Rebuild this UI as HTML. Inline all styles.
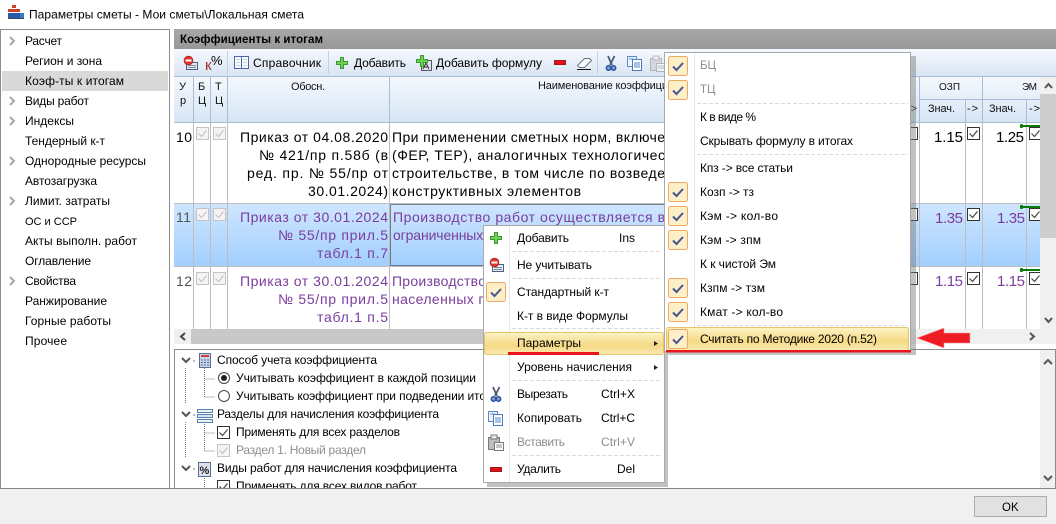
<!DOCTYPE html>
<html><head><meta charset="utf-8"><style>
html,body{margin:0;padding:0;background:#fff;width:1056px;height:524px;overflow:hidden}
svg{display:block}
text{font-family:"Liberation Sans","DejaVu Sans",sans-serif;font-size:12px;fill:#000}
.c{font-size:14px}
.n{font-size:15px}
.p{fill:#7a3d9c}
.g{fill:#8e8e8e}
.s{font-size:11px;fill:#111}
</style></head><body>
<svg width="1056" height="524" viewBox="0 0 1056 524" xmlns="http://www.w3.org/2000/svg">
<defs>
<linearGradient id="tb" x1="0" y1="0" x2="0" y2="1"><stop offset="0" stop-color="#f5f9fe"/><stop offset="1" stop-color="#d9e5f3"/></linearGradient>
<linearGradient id="hd" x1="0" y1="0" x2="0" y2="1"><stop offset="0" stop-color="#f4f8fd"/><stop offset="1" stop-color="#d6e5f5"/></linearGradient>
<linearGradient id="sel" x1="0" y1="0" x2="0" y2="1"><stop offset="0" stop-color="#cfe6ff"/><stop offset="1" stop-color="#a2cffd"/></linearGradient>
<linearGradient id="hl" x1="0" y1="0" x2="0" y2="1"><stop offset="0" stop-color="#fdf3c6"/><stop offset=".6" stop-color="#f5d985"/><stop offset="1" stop-color="#fbeab2"/></linearGradient>
<linearGradient id="bar" x1="0" y1="0" x2="0" y2="1"><stop offset="0" stop-color="#a8a8a8"/><stop offset="1" stop-color="#989898"/></linearGradient>
<g id="mc"><rect x=".5" y=".5" width="19" height="19" rx="2" fill="#fdf0c8" stroke="#f0a860"/><path d="M5 10.5l3.5 3.5 6.5-7" fill="none" stroke="#4a5590" stroke-width="2"/></g>
<g id="dc"><rect x=".5" y=".5" width="12" height="12" fill="#f4f4f4" stroke="#c4c4c4"/><path d="M2.5 6.5l3 3 5-6" fill="none" stroke="#c4c4c4" stroke-width="1.2"/></g>
<g id="kc"><rect x=".5" y=".5" width="12" height="12" fill="#fff" stroke="#333"/><path d="M2.500 6.500l3 3 5-6" fill="none" stroke="#444" stroke-width="1.2"/></g>
<path id="rc" d="M0 0l4 4-4 4" fill="none" stroke="#a8a8a8" stroke-width="2"/>
<path id="dn" d="M0 0l4 4 4-4" fill="none" stroke="#555" stroke-width="2"/>
<g id="gb"><rect x="0" y="0" width="19" height="2" fill="#0a7a0a"/><rect x="-1" y="-1" width="3" height="4" rx="1" fill="#0a7a0a"/></g>
<g id="plus"><path d="M4.500 .5h3v4h4v3h-4v4h-3v-4h-4v-3h4z" fill="#6fd24e" stroke="#3a9a34"/></g>
<g id="noent"><rect x="3.500" y="6.500" width="11" height="7" fill="#e6ecf4" stroke="#4a5f80"/><path d="M5 9.500h8M5 11.500h8" stroke="#7a8aa0"/><circle cx="5.500" cy="4.500" r="4.300" fill="#e0352c" stroke="#b02820"/><rect x="2.500" y="3.500" width="6" height="2" fill="#fff"/></g>
<g id="scis"><path d="M2 0l4 9M8.500 0L4 9" stroke="#4a5a76" stroke-width="1.800" fill="none"/><circle cx="2.500" cy="12" r="2.200" fill="#8aa4d0" stroke="#2a50a0" stroke-width="1.500"/><circle cx="7.500" cy="12" r="2.200" fill="#8aa4d0" stroke="#2a50a0" stroke-width="1.500"/></g>
<g id="copy"><rect x=".5" y=".5" width="9" height="10" fill="#f0f6fc" stroke="#5a8ac8"/><rect x="5.500" y="3.500" width="9" height="11" fill="#fff" stroke="#4a7ac0"/><path d="M7 7h6M7 9h6M7 11h6M2 3h5" stroke="#5a8ac8"/></g>
<g id="paste"><rect x=".5" y="2.500" width="11" height="12" fill="#bdbdbd" stroke="#777"/><rect x="3" y="0" width="6" height="4" fill="#e8e8e8" stroke="#777"/><rect x="6.500" y="7.500" width="9" height="8" fill="#fff" stroke="#777"/><path d="M8 10h6M8 12h6" stroke="#888"/></g>
<g id="minus"><rect x=".5" y=".5" width="11" height="4" fill="#e0101c" stroke="#a01818"/></g>
<clipPath id="tree"><rect x="175" y="350" width="865" height="138"/></clipPath>
</defs>

<!-- title -->
<g>
<rect x="8" y="9" width="4" height="3" fill="#d04030"/><rect x="12" y="5" width="4" height="3" fill="#d04030"/><rect x="12" y="9" width="4" height="3" fill="#d84030"/><rect x="16" y="9" width="4" height="3" fill="#d04030"/>
<rect x="8" y="13" width="4" height="5" fill="#2a5aa8"/><rect x="12" y="13" width="4" height="5" fill="#2a5aa8"/><rect x="16" y="13" width="4" height="5" fill="#2a5aa8"/><rect x="20" y="13" width="4" height="5" fill="#2a80c8"/>
<rect x="8" y="18" width="16" height="1" fill="#3a4a60"/>
</g>
<text x="29" y="18.5" textLength="275" lengthAdjust="spacing">Параметры сметы - Мои сметы\Локальная смета</text>

<!-- left nav -->
<rect x=".5" y="29.5" width="169" height="459" fill="#fff" stroke="#8c8c8c"/>
<rect x="2" y="71" width="166" height="20" fill="#d9d9d9"/>
<use href="#rc" x="10" y="37"/><use href="#rc" x="10" y="97"/><use href="#rc" x="10" y="117"/><use href="#rc" x="10" y="157"/><use href="#rc" x="10" y="197"/><use href="#rc" x="10" y="277"/>
<text x="25" y="45" textLength="37">Расчет</text>
<text x="25" y="65" textLength="77">Регион и зона</text>
<text x="25" y="85" textLength="99">Коэф-ты к итогам</text>
<text x="25" y="105" textLength="64">Виды работ</text>
<text x="25" y="125" textLength="49">Индексы</text>
<text x="25" y="145" textLength="80">Тендерный к-т</text>
<text x="25" y="165" textLength="121">Однородные ресурсы</text>
<text x="25" y="185" textLength="72">Автозагрузка</text>
<text x="25" y="205" textLength="85">Лимит. затраты</text>
<text x="25" y="225" textLength="52" style="font-size:11px">ОС и ССР</text>
<text x="25" y="245" textLength="112">Акты выполн. работ</text>
<text x="25" y="265" textLength="66">Оглавление</text>
<text x="25" y="285" textLength="51">Свойства</text>
<text x="25" y="305" textLength="82">Ранжирование</text>
<text x="25" y="325" textLength="86">Горные работы</text>
<text x="25" y="345" textLength="42">Прочее</text>

<!-- header bar -->
<rect x="174" y="29" width="882" height="20" fill="url(#bar)"/>
<text x="180" y="43" textLength="143" style="font-weight:bold;font-size:11.5px" fill="#111">Коэффициенты к итогам</text>

<!-- toolbar -->
<rect x="174" y="49" width="882" height="27" fill="url(#tb)"/>
<rect x="174" y="76" width="882" height="1" fill="#a9bcd6"/>
<rect x="227" y="51" width="1" height="23" fill="#c3d0e0"/><rect x="328" y="51" width="1" height="23" fill="#c3d0e0"/><rect x="597" y="51" width="1" height="23" fill="#c3d0e0"/>
<use href="#noent" x="183" y="56"/>
<text x="205" y="70" style="font-size:15px;fill:#a03030">к</text>
<text x="211" y="65" style="font-size:13px" fill="#333">%</text>
<rect x="234.500" y="56.500" width="14" height="12" fill="#f8fbfe" stroke="#4a6aa8"/><path d="M241.500 57v11" stroke="#4a6aa8"/><path d="M236 59.500h4M236 62.500h4M236 65.500h4M243 59.500h4M243 62.500h4M243 65.500h4" stroke="#c8d4e4"/>
<text x="253" y="67" textLength="68">Справочник</text>
<use href="#plus" x="336" y="57"/>
<text x="354" y="67" textLength="52">Добавить</text>
<rect x="421.500" y="60.500" width="10" height="10" fill="#dfe3ea" stroke="#556"/><path d="M423 69l3-6 3 6M424 67h4" fill="none" stroke="#333"/>
<use href="#plus" x="416" y="55"/>
<text x="436" y="67" textLength="106">Добавить формулу</text>
<use href="#minus" x="554" y="60"/>
<path d="M577.500 65.500l7-7h5l2 2-7 7h-5z" fill="#fafbfd" stroke="#6a7484"/><path d="M577 69.500h14" stroke="#111"/>
<use href="#scis" x="606" y="56"/>
<use href="#copy" x="627" y="56"/>
<g opacity=".45"><use href="#paste" x="650" y="56"/></g>

<!-- grid header -->
<rect x="174" y="77" width="866" height="45" fill="url(#hd)"/>
<path d="M174 122.500H1040M919 99.500H1040" stroke="#a9bcd6"/>
<path d="M193.500 77V122M210.500 77V122M227.500 77V122M389.500 77V122M919.500 77V122M982.500 77V122M965.500 99V122M1026.500 99V122" stroke="#a9bcd6"/>
<text class="s" x="179" y="90" textLength="9">У</text><text class="s" x="180" y="104">р</text>
<text class="s" x="198" y="90">Б</text><text class="s" x="198" y="104">Ц</text>
<text class="s" x="215" y="90">Т</text><text class="s" x="215" y="104">Ц</text>
<text class="s" x="291" y="90" textLength="34">Обосн.</text>
<text class="s" x="538" y="89" textLength="130">Наименование коэффици</text>
<text class="s" x="939" y="90" textLength="21" style="font-size:10px">ОЗП</text>
<text class="s" x="1022" y="90" textLength="15" style="font-size:10px">ЭМ</text>
<text class="s" x="928" y="112" textLength="27">Знач.</text>
<text class="s" x="989" y="112" textLength="27">Знач.</text>
<text class="s" x="967" y="112" textLength="11">-&gt;</text>
<text class="s" x="1029" y="112" textLength="11">-&gt;</text>
<text class="s" x="908" y="112" textLength="9">-&gt;</text>

<!-- rows -->
<rect x="174" y="204" width="866" height="62" fill="url(#sel)"/>
<path d="M174 203.500H1040M174 266.500H1040" stroke="#bdbdbd"/>
<path d="M193.500 123V329M210.500 123V329M227.500 123V329M389.500 123V329M919.500 123V329M965.500 123V329M982.500 123V329M1026.500 123V329" stroke="#bdbdbd"/>
<rect x="390.500" y="204.500" width="400" height="61" fill="none" stroke="#222" stroke-dasharray="1 1"/>

<text class="c" x="176" y="142" textLength="16">10</text>
<use href="#dc" x="196" y="127"/><use href="#dc" x="213" y="127"/>
<text class="c" x="240" y="142" textLength="148">Приказ от 04.08.2020</text>
<text class="c" x="259" y="160" textLength="129">№ 421/пр п.58б (в</text>
<text class="c" x="247" y="178" textLength="141">ред. пр. № 55/пр от</text>
<text class="c" x="308" y="196" textLength="80">30.01.2024)</text>
<text class="c" x="392" y="142" textLength="273">При применении сметных норм, включе</text>
<text class="c" x="392" y="160" textLength="273">(ФЕР, ТЕР), аналогичных технологичес</text>
<text class="c" x="392" y="178" textLength="273">строительстве, в том числе по возведе</text>
<text class="c" x="392" y="196" textLength="189">конструктивных элементов</text>

<text class="c p" x="176" y="222" textLength="15" style="fill:#555">11</text>
<use href="#dc" x="196" y="208"/><use href="#dc" x="213" y="208"/>
<text class="c p" x="240" y="222" textLength="148">Приказ от 30.01.2024</text>
<text class="c p" x="278" y="240" textLength="110">№ 55/пр прил.5</text>
<text class="c p" x="317" y="258" textLength="71">табл.1 п.7</text>
<text class="c p" x="393" y="222" textLength="272">Производство работ осуществляется в</text>
<text class="c p" x="393" y="240" textLength="94">ограниченных:</text>

<text class="c" x="176" y="286" textLength="16" style="fill:#555">12</text>
<use href="#dc" x="196" y="272"/><use href="#dc" x="213" y="272"/>
<text class="c p" x="240" y="286" textLength="148">Приказ от 30.01.2024</text>
<text class="c p" x="278" y="304" textLength="110">№ 55/пр прил.5</text>
<text class="c p" x="317" y="322" textLength="71">табл.1 п.5</text>
<text class="c p" x="392" y="286" textLength="94">Производство</text>
<text class="c p" x="392" y="304" textLength="94">населенных п</text>

<text class="n" x="934" y="142" textLength="29">1.15</text>
<text class="n" x="996" y="142" textLength="28">1.25</text>
<text class="n p" x="935" y="223" textLength="28">1.35</text>
<text class="n p" x="997" y="223" textLength="28">1.35</text>
<text class="n p" x="935" y="286" textLength="28">1.15</text>
<text class="n p" x="997" y="286" textLength="28">1.15</text>
<use href="#kc" x="967" y="127"/><use href="#kc" x="967" y="208"/><use href="#kc" x="967" y="272"/>
<use href="#kc" x="1029" y="127"/><use href="#kc" x="1029" y="208"/><use href="#kc" x="1029" y="272"/>
<rect x="905.500" y="127.500" width="12" height="12" fill="#fff" stroke="#333"/><rect x="905.500" y="208.500" width="12" height="12" fill="#fff" stroke="#333"/><rect x="905.500" y="272.500" width="12" height="12" fill="#fff" stroke="#333"/>
<use href="#gb" x="1021" y="125"/><use href="#gb" x="1021" y="206"/><use href="#gb" x="1021" y="269"/>

<!-- v scroll -->
<rect x="1040" y="77" width="16" height="252" fill="#f0f0f0"/>
<rect x="1040" y="94" width="16" height="144" fill="#cdcdcd"/>
<path d="M1045 88l3.500-4 3.500 4" fill="none" stroke="#555" stroke-width="2"/>
<path d="M1045 318l3.500 4 3.500-4" fill="none" stroke="#555" stroke-width="2"/>
<!-- h scroll -->
<rect x="174" y="329" width="882" height="15" fill="#f0f0f0"/>
<rect x="191" y="329" width="600" height="15" fill="#c8c8c8"/>
<path d="M185 333l-4 3.500 4 3.500" fill="none" stroke="#444" stroke-width="2"/>
<path d="M1030 333l4 3.500-4 3.500" fill="none" stroke="#555" stroke-width="2"/>

<!-- tree -->
<rect x="174.500" y="349.500" width="881" height="139" fill="#fff" stroke="#8c8c8c"/>
<rect x="1040" y="350" width="15" height="138" fill="#f0f0f0"/>
<path d="M1044 364l4-4 4 4" fill="none" stroke="#555" stroke-width="2"/>
<path d="M1044 476l4 4 4-4" fill="none" stroke="#555" stroke-width="2"/>
<g clip-path="url(#tree)">
<use href="#dn" x="182" y="358"/><use href="#dn" x="182" y="412"/><use href="#dn" x="182" y="466"/>
<path d="M185.500 368V404M185.500 422V458M204.500 368V397H215M204.500 379H215M204.500 422V451H215M204.500 433H215M204.500 476V490" stroke="#777" stroke-dasharray="1 1" fill="none"/>
<path d="M193 361h2M193 415h2M193 469h2" stroke="#777"/>
<rect x="199.500" y="353.500" width="11" height="14" fill="#c9d6e8" stroke="#5a6f90"/><rect x="201" y="355" width="8" height="2" fill="#d04040"/><path d="M201 360h8M201 362.500h8M201 365h8" stroke="#4a6ea0" stroke-dasharray="2 1"/>
<rect x="197.500" y="409.500" width="15" height="3" fill="#eef3fa" stroke="#5a7faa"/><rect x="197.500" y="414.500" width="15" height="3" fill="#dbe6f3" stroke="#5a7faa"/><rect x="197.500" y="419.500" width="15" height="3" fill="#eef3fa" stroke="#5a7faa"/>
<rect x="198.500" y="462.500" width="12" height="14" fill="#dbe2ee" stroke="#5a6f90"/><text x="199.500" y="474" style="font-size:11px;fill:#222;font-weight:bold">%</text>
<text x="217" y="364" textLength="160">Способ учета коэффициента</text>
<circle cx="224" cy="378" r="5.500" fill="#fff" stroke="#444"/><circle cx="224" cy="378" r="3" fill="#222"/>
<text x="236" y="382" textLength="240">Учитывать коэффициент в каждой позиции</text>
<circle cx="224" cy="396" r="5.500" fill="#fff" stroke="#444"/>
<text x="236" y="400" textLength="250">Учитывать коэффициент при подведении ито</text>
<text x="217" y="418" textLength="222">Разделы для начисления коэффициента</text>
<use href="#kc" x="217" y="426"/>
<text x="236" y="436" textLength="164">Применять для всех разделов</text>
<use href="#dc" x="217" y="444"/>
<text class="g" x="236" y="454" textLength="130">Раздел 1. Новый раздел</text>
<text x="217" y="472" textLength="240">Виды работ для начисления коэффициента</text>
<use href="#kc" x="217" y="480"/>
<text x="236" y="490" textLength="181">Применять для всех видов работ</text>
</g>

<!-- footer -->
<rect x="0" y="489" width="1056" height="35" fill="#f0f0f0"/>
<rect x="0" y="488" width="1056" height="1" fill="#858585"/>
<rect x="974.500" y="496.500" width="72" height="20" fill="#e1e1e1" stroke="#adadad"/>
<text x="1002" y="511" style="font-size:11.500px">OK</text>

<!-- context menu 1 -->
<rect x="487" y="229" width="181" height="258" fill="#777" opacity=".45"/>
<rect x="483.500" y="225.500" width="181" height="257" fill="#fff" stroke="#a8a8a8"/>
<rect x="509" y="226" width="1" height="256" fill="#e6e6e6"/>
<path d="M512 251.500H662M512 278.500H662M512 328.500H662M512 380.500H662M512 455.500H662" stroke="#dcdcdc" stroke-dasharray="4 2"/>
<use href="#plus" x="490" y="232"/>
<use href="#noent" x="489" y="258"/>
<use href="#mc" x="486" y="282"/>
<rect x="484.500" y="332.500" width="179" height="22" rx="2" fill="url(#hl)" stroke="#e5c46a"/>
<use href="#scis" x="491" y="387"/>
<use href="#copy" x="488" y="411"/>
<use href="#paste" x="488" y="435"/>
<use href="#minus" x="490" y="467"/>
<text x="517" y="242" textLength="52">Добавить</text><text x="635" y="242" text-anchor="end">Ins</text>
<text x="517" y="269" textLength="75">Не учитывать</text>
<text x="517" y="296" textLength="92">Стандартный к-т</text>
<text x="517" y="320" textLength="111">К-т в виде Формулы</text>
<text x="517" y="347" textLength="64">Параметры</text>
<path d="M654 341l4 2.500-4 2.500z" fill="#222"/>
<text x="517" y="371" textLength="115">Уровень начисления</text>
<path d="M654 365l4 2.500-4 2.500z" fill="#222"/>
<text x="517" y="398" textLength="51">Вырезать</text><text x="601" y="398" textLength="34">Ctrl+X</text>
<text x="517" y="422" textLength="65">Копировать</text><text x="601" y="422" textLength="34">Ctrl+C</text>
<text class="g" x="517" y="446" textLength="48">Вставить</text><text class="g" x="601" y="446" textLength="34">Ctrl+V</text>
<text x="517" y="473" textLength="44">Удалить</text><text x="635" y="473" text-anchor="end">Del</text>
<rect x="508" y="352" width="91" height="3" fill="#e8141e"/>

<!-- context menu 2 -->
<rect x="668" y="56" width="248" height="299" fill="#777" opacity=".45"/>
<rect x="664.500" y="52.500" width="246" height="299" fill="#fff" stroke="#a8a8a8"/>
<rect x="694" y="53" width="1" height="298" fill="#e6e6e6"/>
<path d="M697 103.500H908M697 154.500H908M697 325.500H908" stroke="#dcdcdc" stroke-dasharray="4 2"/>
<use href="#mc" x="668" y="56"/><use href="#mc" x="668" y="80"/>
<use href="#mc" x="668" y="182"/><use href="#mc" x="668" y="206"/><use href="#mc" x="668" y="230"/>
<use href="#mc" x="668" y="278"/><use href="#mc" x="668" y="302"/>
<rect x="666.500" y="327.500" width="242" height="23" rx="2" fill="url(#hl)" stroke="#e5c46a"/>
<use href="#mc" x="668" y="329"/>
<text class="g" x="700" y="69" style="font-size:11.500px">БЦ</text>
<text class="g" x="700" y="93" style="font-size:11.500px">ТЦ</text>
<text x="700" y="121" textLength="56">К в виде %</text>
<text x="700" y="145" textLength="153">Скрывать формулу в итогах</text>
<text x="700" y="172" textLength="93">Кпз -&gt; все статьи</text>
<text x="700" y="196" textLength="54">Козп -&gt; тз</text>
<text x="700" y="220" textLength="78">Кэм -&gt; кол-во</text>
<text x="700" y="244" textLength="61">Кэм -&gt; зпм</text>
<text x="700" y="268" textLength="76">К к чистой Эм</text>
<text x="700" y="292" textLength="65">Кзпм -&gt; тзм</text>
<text x="700" y="316" textLength="83">Кмат -&gt; кол-во</text>
<text x="700" y="343" textLength="177">Считать по Методике 2020 (п.52)</text>
<rect x="666" y="350" width="245" height="2.500" fill="#e8141e"/>

<!-- red arrow -->
<path d="M917 338L944 328V333H970V343H944V348z" fill="#ee1c25" stroke="#f7a0a0" stroke-width=".6"/>
</svg>
</body></html>
